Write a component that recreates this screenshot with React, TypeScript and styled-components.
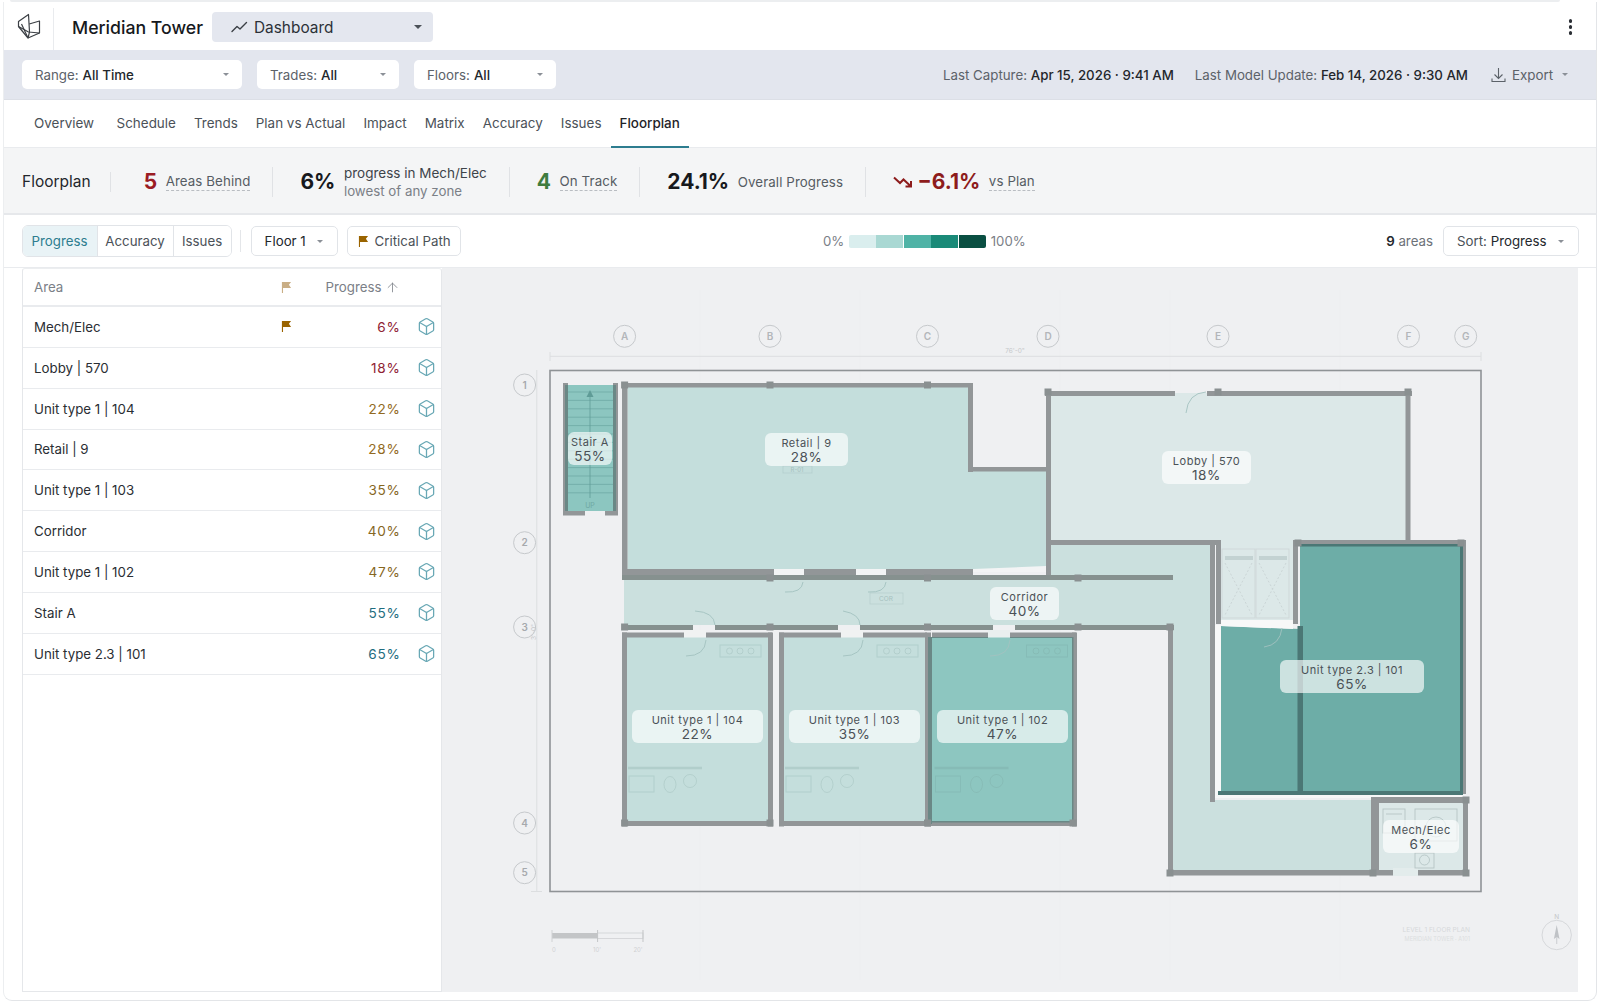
import styled, { createGlobalStyle } from "styled-components";
import { Box, ArrowUp } from "lucide-react";

const GlobalStyle = createGlobalStyle`
  html, body {
    margin: 0;
    padding: 0;
    background: #fff;
  }
  body {
    font-family: Inter, "Noto Sans", sans-serif;
    color: #1f2328;
    overflow: hidden;
  }
`;

const Page = styled.div`
  width: 1600px;
  height: 1005px;
  box-sizing: border-box;
  padding: 0 3px;
  position: relative;
`;

const TopEdge = styled.div`
  height: 2px;
  margin: 0 37px 0 7px;
  background: #eceef0;
  border-radius: 0 0 4px 4px;
`;

const Shell = styled.div`
  display: flex;
  flex-direction: column;
  height: 999px;
  box-sizing: border-box;
  border-bottom: 1px solid #e3e5e8;
  border-right: 1px solid #e3e5e8;
  border-left: 1px solid #eceef0;
  border-radius: 0 0 9px 9px;
  overflow: hidden;
`;

const Header = styled.header`
  height: 48px;
  flex: none;
  box-sizing: border-box;
  display: flex;
  align-items: center;
  padding: 6px 18px 0 0;
`;

const LogoCell = styled.div`
  width: 50px;
  height: 42px;
  box-sizing: border-box;
  border-right: 1px solid #e9ebee;
  display: flex;
  align-items: center;
  padding: 0 0 6px 13px;
  margin-right: 18px;
`;

const ProjectName = styled.h1`
  margin: -4px 9px 0 0;
  font-size: 17.7px;
  font-weight: 500;
  color: #16191d;
  white-space: nowrap;
`;

const ViewSelect = styled.div`
  width: 221px;
  height: 30px;
  margin-top: -4px;
  box-sizing: border-box;
  background: #e4e7ef;
  border-radius: 4px;
  display: flex;
  align-items: center;
  padding: 0 11px 0 19px;
  gap: 6px;
  font-size: 15.4px;
  color: #2c3138;
`;

const Caret = styled.span<{ $size?: number; $color?: string }>`
  margin-left: auto;
  width: 0;
  height: 0;
  flex: none;
  border-left: ${({ $size }) => $size ?? 3}px solid transparent;
  border-right: ${({ $size }) => $size ?? 3}px solid transparent;
  border-top: ${({ $size }) => $size ?? 3}px solid ${({ $color }) => $color ?? "#8b9097"};
`;

const MoreButton = styled.div`
  margin-left: auto;
  margin-top: -4px;
  display: flex;
  flex-direction: column;
  gap: 2.5px;
  padding-right: 6px;

  span {
    width: 3.5px;
    height: 3.5px;
    border-radius: 50%;
    background: #2b2f35;
  }
`;

const FilterBar = styled.div`
  height: 50px;
  flex: none;
  box-sizing: border-box;
  background: #e3e6ee;
  border-bottom: 1px solid #dcdfe6;
  display: flex;
  align-items: center;
  padding: 0 18px;
  gap: 15px;
  font-size: 13.3px;
`;

const FilterSelect = styled.div<{ $width: number }>`
  width: ${({ $width }) => $width}px;
  height: 29px;
  box-sizing: border-box;
  background: #fff;
  border-radius: 5px;
  display: flex;
  align-items: center;
  padding: 0 13px 0 13px;
  color: #5c6269;
  white-space: nowrap;

  b {
    font-weight: 500;
    color: #23272c;
    margin-left: 4px;
  }
`;

const CaptureInfo = styled.div`
  margin-left: auto;
  display: flex;
  align-items: center;
  gap: 21px;
  color: #5c6269;
  font-size: 13.3px;
  white-space: nowrap;

  b {
    font-weight: 500;
    color: #23272c;
  }
`;

const ExportButton = styled.div`
  display: flex;
  align-items: center;
  gap: 6px;
  width: 77px;
  margin: 0 10px 0 2px;
  color: #5c6269;
  font-size: 13.4px;
`;

const TabBar = styled.nav`
  height: 48px;
  flex: none;
  box-sizing: border-box;
  border-bottom: 1px solid #e9ebee;
  display: flex;
  align-items: stretch;
  padding-left: 21px;
`;

const Tab = styled.div<{ $active?: boolean; $gap?: number }>`
  display: flex;
  align-items: center;
  padding: 0 9px;
  margin-right: ${({ $gap }) => $gap ?? 0}px;
  font-size: 13.45px;
  font-weight: ${({ $active }) => ($active ? 500 : 400)};
  color: ${({ $active }) => ($active ? "#1f2328" : "#4b5158")};
  border-bottom: 2px solid ${({ $active }) => ($active ? "#2d7d8f" : "transparent")};
  margin-bottom: -1px;
`;

const StatsStrip = styled.section`
  height: 67px;
  flex: none;
  box-sizing: border-box;
  background: #f4f5f6;
  border-bottom: 2px solid #e6e8eb;
  display: flex;
  align-items: center;
  padding: 2px 0 0 18px;
`;

const StripTitle = styled.div`
  font-size: 15.5px;
  color: #23272c;
  padding-right: 19px;
  border-right: 1px solid #e0e2e5;
  line-height: 20px;
`;

const Stat = styled.div<{ $first?: boolean; $last?: boolean }>`
  display: flex;
  align-items: center;
  gap: 8.5px;
  height: 30px;
  padding: 0 22px 0 ${({ $first }) => ($first ? 33 : 27)}px;
  border-right: ${({ $last }) => ($last ? "none" : "1px solid #e0e2e5")};
`;

const StatValue = styled.span<{ $color?: string }>`
  font-size: 21px;
  font-weight: 700;
  color: ${({ $color }) => $color ?? "#17191d"};
`;

const TrendValue = styled(StatValue)`
  margin-left: -4px;
`;

const StatLabel = styled.span`
  font-size: 13.3px;
  color: #565c63;
  border-bottom: 1px dashed #b9bdc2;
  line-height: 17px;
  letter-spacing: 0.1px;
`;

const StatPlain = styled.span`
  font-size: 13.3px;
  color: #565c63;
  letter-spacing: 0.1px;
`;

const StatStack = styled.div`
  display: flex;
  flex-direction: column;
  font-size: 13.5px;
  line-height: 18px;
  color: #3e444a;

  small {
    font-size: 13.3px;
    color: #7b8087;
  }
`;

const Toolbar = styled.div`
  height: 52px;
  flex: none;
  box-sizing: border-box;
  display: flex;
  align-items: center;
  padding: 0 17px 0 17.6px;
  font-size: 13.3px;
  position: relative;
`;

const Segments = styled.div`
  display: flex;
  height: 32px;
  box-sizing: border-box;
  border: 1px solid #e1e4e8;
  border-radius: 6px;
  overflow: hidden;
  margin-right: 8px;
`;

const Segment = styled.div<{ $active?: boolean; $width: number }>`
  width: ${({ $width }) => $width}px;
  box-sizing: border-box;
  display: flex;
  align-items: center;
  justify-content: center;
  color: ${({ $active }) => ($active ? "#2d7d8f" : "#4b5158")};
  background: ${({ $active }) => ($active ? "#e9f3f6" : "#fff")};
  border-right: 1px solid #e1e4e8;

  &:last-child {
    border-right: 0;
  }
`;

const ToolSep = styled.div`
  width: 1px;
  height: 22px;
  background: #e4e6e9;
  margin-right: 10px;
`;

const ToolButton = styled.div<{ $width: number; $gap?: number }>`
  width: ${({ $width }) => $width}px;
  height: 30px;
  box-sizing: border-box;
  border: 1px solid #e1e4e8;
  border-radius: 5px;
  display: flex;
  align-items: center;
  gap: 6px;
  padding: 0 14px 0 10px;
  margin-right: ${({ $gap }) => $gap ?? 0}px;
  color: #4b5158;
  white-space: nowrap;

  em {
    font-style: normal;
    color: #23272c;
  }

  svg {
    flex: none;
  }
`;

const Legend = styled.div`
  position: absolute;
  left: 819px;
  top: 0;
  height: 52px;
  display: flex;
  align-items: center;
  gap: 4.5px;
  font-size: 13.2px;
  color: #7b8087;
`;

const LegendBar = styled.div`
  display: flex;
  border-radius: 2px;
  overflow: hidden;
  height: 13px;
`;

const LegendStep = styled.i<{ $color: string }>`
  width: 26.9px;
  margin-right: 0.6px;
  background: ${({ $color }) => $color};
`;

const ToolRight = styled.div`
  margin-left: auto;
  display: flex;
  align-items: center;
  gap: 10px;
  font-size: 13.3px;
  color: #6c7178;

  b {
    font-weight: 600;
    color: #23272c;
  }
`;

const Body = styled.main`
  flex: 1;
  min-height: 0;
  display: flex;
  padding: 0 18px 8px 18px;
  border-top: 1px solid #e9ebee;
`;

const TablePanel = styled.div`
  width: 420px;
  flex: none;
  box-sizing: border-box;
  border: 1px solid #e5e7ea;
  border-top-color: #eceef0;
  border-radius: 3px 3px 0 0;
`;

const TableHead = styled.div`
  height: 38px;
  box-sizing: border-box;
  display: flex;
  align-items: center;
  padding: 0 5.5px 0 11px;
  border-bottom: 2px solid #e9ebee;
  font-size: 13.3px;
  color: #7b8087;
`;

const TableRow = styled.div`
  height: 40.85px;
  box-sizing: border-box;
  display: flex;
  align-items: center;
  padding: 0 5.5px 0 11px;
  border-bottom: 1px solid #e9ebee;
  font-size: 13.3px;
  color: #2a2e33;
`;

const AreaName = styled.div`
  flex: 1;
  min-width: 0;
`;

const FlagCell = styled.div`
  width: 14px;
  display: flex;
`;

const ProgressCell = styled.div<{ $color?: string }>`
  width: 106px;
  display: flex;
  justify-content: flex-end;
  align-items: center;
  gap: 3px;
  margin-right: 16px;
  font-size: 13.6px;
  letter-spacing: 0.7px;
  color: ${({ $color }) => $color ?? "#7b8087"};
`;

const HeadProgress = styled(ProgressCell)`
  letter-spacing: 0;
  font-size: 13.3px;
  box-sizing: border-box;
  padding-right: 1px;
`;

const IconCell = styled.div`
  width: 19px;
  display: flex;
  color: #69a8b5;
`;

const PlanPanel = styled.div`
  flex: 1;
  min-width: 0;
  background: #eff0f2;
  position: relative;
  overflow: hidden;
`;

const PlanSvg = styled.svg`
  display: block;
  width: 1136px;
  height: 724px;
`;

const AreaTag = styled.div<{ $x: number; $y: number; $w: number }>`
  position: absolute;
  left: ${({ $x }) => $x - 442}px;
  top: ${({ $y }) => $y - 268}px;
  width: ${({ $w }) => $w}px;
  height: 33px;
  box-sizing: border-box;
  padding-top: 2px;
  border-radius: 6px;
  background: rgba(255, 255, 255, 0.65);
  display: flex;
  flex-direction: column;
  align-items: center;
  justify-content: center;
  color: #4a5156;
  font-size: 11px;
  letter-spacing: 0.5px;
  line-height: 14px;
  white-space: nowrap;

  strong {
    font-weight: 400;
    font-size: 13.6px;
    line-height: 15px;
  }
`;

const FlagIcon = ({ color }: { color: string }) => (
  <svg width="11" height="13" viewBox="0 0 12 14">
    <path d="M1 1h10L8.6 4 11 7.5H2.2V13H1z" fill={color} />
  </svg>
);

const rowsData = [
  { name: "Mech/Elec", pct: 6, color: "#8f2234", flag: true },
  { name: "Lobby | 570", pct: 18, color: "#8f2234" },
  { name: "Unit type 1 | 104", pct: 22, color: "#926a22" },
  { name: "Retail | 9", pct: 28, color: "#926a22" },
  { name: "Unit type 1 | 103", pct: 35, color: "#86671f" },
  { name: "Corridor", pct: 40, color: "#86671f" },
  { name: "Unit type 1 | 102", pct: 47, color: "#86671f" },
  { name: "Stair A", pct: 55, color: "#1f6d80" },
  { name: "Unit type 2.3 | 101", pct: 65, color: "#1f6d80" },
];

const tags = [
  { x: 568, y: 432, w: 44, name: "Stair A", pct: 55 },
  { x: 765, y: 433, w: 83, name: "Retail | 9", pct: 28 },
  { x: 1162, y: 451, w: 89, name: "Lobby | 570", pct: 18 },
  { x: 990, y: 587, w: 69, name: "Corridor", pct: 40 },
  { x: 632, y: 710, w: 131, name: "Unit type 1 | 104", pct: 22 },
  { x: 789, y: 710, w: 131, name: "Unit type 1 | 103", pct: 35 },
  { x: 937, y: 710, w: 131, name: "Unit type 1 | 102", pct: 47 },
  { x: 1280, y: 660, w: 144, name: "Unit type 2.3 | 101", pct: 65 },
  { x: 1383, y: 820, w: 76, name: "Mech/Elec", pct: 6 },
];

const gridCols: [string, number][] = [
  ["A", 624.6], ["B", 770], ["C", 927.5], ["D", 1048], ["E", 1218], ["F", 1408.5], ["G", 1465.7],
];
const gridRows: [string, number][] = [
  ["1", 385], ["2", 542.7], ["3", 627], ["4", 823], ["5", 872.7],
];

// x, y, w, h
const walls: number[][] = [
  // stair
  [563, 383, 5, 132], [613, 383, 5, 132], [563, 511, 22, 4.5], [605, 511, 13, 4.5],
  // retail
  [622, 383, 351, 4.5], [622, 383, 5.5, 196], [968, 383, 5, 89], [973, 467, 73, 4.5],
  [622, 569, 152, 6], [804, 569, 52, 6], [886, 569, 87, 6],
  // lobby
  [1045, 391, 130, 5], [1207, 391, 205, 5], [1046, 391, 5, 188], [1405.5, 391, 5, 150],
  [1051, 540, 170, 5], [1210, 545, 5, 257], [1216, 540, 5, 84], [1293, 540, 5, 84],
  [1293, 540, 172, 4.5],
  // corridor outer
  [1168, 625, 5, 248], [1168, 870, 225, 5.5], [1418, 870, 51, 5.5],
  // units
  [622, 632.5, 62, 5], [706, 632.5, 66, 5], [622, 632.5, 5, 194], [768, 632.5, 5, 194],
  [622, 821, 151, 5], [779, 632.5, 62, 5], [863, 632.5, 64, 5], [779, 632.5, 5, 194],
  [925, 632.5, 6, 194], [779, 821, 152, 5], [932, 632.5, 56, 5], [1010, 632.5, 66, 5],
  [1072, 632.5, 5, 194], [931, 821, 146, 5],
  // mech
  [1371, 798, 8, 77], [1371, 797, 98, 6], [1463, 797, 5, 78],
  // unit 2.3 outer
  [1463, 540, 3, 254],
];

const corridorWalls: number[][] = [
  [622, 575, 551, 5], [622, 625, 71, 5], [715, 625, 123, 5], [860, 625, 133, 5], [1015, 625, 159, 5],
];

const darkWalls: number[][] = [
  [1300, 544, 162, 2.5], [1460, 544, 3, 248], [1297.5, 626, 5.5, 166], [1218, 791, 245, 4],
];

const softWalls: number[][] = [
  [565, 385, 3, 126], [613, 385, 3, 126],
  [928, 637, 4, 187], [1072, 637, 1.5, 187], [932, 821, 140, 1.5], [932, 637, 56, 1], [1010, 637, 62, 1],
];

const columns: number[][] = [
  [624.6, 385], [770, 385], [927.5, 385], [1048, 392], [1218, 392], [1408, 392],
  [770, 578], [927.5, 578], [1078, 578], [624.6, 627], [770, 627], [927.5, 627], [1078, 627], [1170, 627],
  [624.6, 823], [770, 823], [927.5, 823], [1073, 823],
  [1170, 873], [1373, 873], [1466, 873], [1466, 800], [1461, 543], [1298, 543],
];

const doorArcs = [
  "M803 582 Q802 593 785 592", "M886 582 Q885 593 868 592",
  "M695 611 Q714 612 715 625", "M843 611 Q860 614 860 625",
  "M706 640 Q705 656 686 656", "M863 640 Q862 656 843 656", "M1010 640 Q1009 656 990 656",
  "M1206 392 Q1188 393 1186 413", "M1282 628 Q1280 645 1264 647",
];

const unitOffsets = [0, 157, 306.5];

const FloorPlan = () => (
  <PlanSvg viewBox="442 268 1136 724">
    {[700, 860, 1060, 1170, 1340].map((x) => (
      <line key={x} x1={x} y1="290" x2={x} y2="980" stroke="#edeef0" strokeWidth="1" />
    ))}
    <rect x="550" y="370.5" width="931" height="521" fill="none" stroke="#8f9396" strokeWidth="1.6" />

    <line x1="550" y1="356.3" x2="1481" y2="356.3" stroke="#dcdee0" />
    <line x1="550" y1="352" x2="550" y2="361" stroke="#dcdee0" />
    <line x1="1481" y1="352" x2="1481" y2="361" stroke="#dcdee0" />
    <text x="1015" y="353" fontSize="6.5" fill="#c6c8cb" textAnchor="middle">76'-0"</text>
    <line x1="536.8" y1="370" x2="536.8" y2="891" stroke="#dcdee0" />
    <line x1="531" y1="891.5" x2="542" y2="891.5" stroke="#dcdee0" />

    {gridCols.map(([label, x]) => (
      <g key={label}>
        <circle cx={x} cy="336.3" r="11" fill="none" stroke="#c6c9cc" />
        <text x={x} y="340" fontSize="10" fontWeight="600" fill="#b3b6ba" textAnchor="middle">{label}</text>
      </g>
    ))}
    {gridRows.map(([label, y]) => (
      <g key={label}>
        <circle cx="524.6" cy={y} r="11" fill="#eff0f2" stroke="#c6c9cc" />
        <text x="524.6" y={y + 3.7} fontSize="10" fontWeight="600" fill="#a6a9ad" textAnchor="middle">{label}</text>
      </g>
    ))}
    <text transform="translate(536 640) rotate(-90)" fontSize="6.5" fill="#c6c8cb">3'-0"</text>

    {/* area fills */}
    <path d="M1051 393H1406V540H1293V625H1221V540H1051z" fill="#dce8e8" />
    <path d="M624 579H1050V545H1210V800H1371V870H1173V625H624z" fill="#cbe0de" />
    <path d="M627.5 387H968V471H1046V572L627.5 569z" fill="#c4dedc" />
    <rect x="568" y="385" width="45" height="126" fill="#8cc6c0" />
    <rect x="627" y="637" width="141" height="184" fill="#c4dedc" />
    <rect x="784" y="637" width="141" height="184" fill="#c4dedc" />
    <rect x="932" y="637" width="141" height="184" fill="#8dc6c0" />
    <path d="M1300 545H1460V792H1220.7V626L1300 629z" fill="#6dada7" />
    <rect x="1379" y="803" width="84" height="67" fill="#dce8e8" />
    <rect x="1393" y="868" width="25" height="8" fill="#e3ecec" />
    <rect x="684" y="630" width="22" height="7.5" fill="#f0f2f2" />
    <rect x="841" y="630" width="22" height="7.5" fill="#f0f2f2" />
    <rect x="988" y="630" width="22" height="7.5" fill="#e9efef" />

    {/* door gaps */}
    <rect x="774" y="569" width="30" height="6" fill="#f3f4f5" />
    <rect x="856" y="569" width="30" height="6" fill="#f3f4f5" />
    <path d="M973 569L1046 566V572H973z" fill="#f3f4f5" />
    <path d="M1221 620H1293V629L1221 626z" fill="#f7f8f8" />
    <rect x="1215" y="625" width="6" height="170" fill="#f7f8f8" />
    <rect x="1215" y="795" width="248" height="3" fill="#f7f8f8" />

    {/* stair */}
    {Array.from({ length: 13 }, (_, i) => (
      <line key={i} x1="568" x2="613" y1={392 + i * 8.4} y2={392 + i * 8.4} stroke="#6faaa5" strokeWidth="0.8" />
    ))}
    <line x1="590" y1="392" x2="590" y2="498" stroke="#5f9c97" strokeWidth="0.8" />
    <path d="M586.5 397L590 390L593.5 397z" fill="#5f9c97" />
    <text x="590" y="508" fontSize="7" fill="#6fa8a3" textAnchor="middle">UP</text>

    {/* unit fixtures */}
    {unitOffsets.map((dx) => (
      <g key={dx} transform={`translate(${dx} 0)`} fill="none" stroke="#6f9491" strokeOpacity="0.22" strokeWidth="0.9">
        <rect x="720" y="645" width="41" height="12" />
        <circle cx="729.5" cy="651" r="3" />
        <circle cx="740" cy="651" r="3" />
        <circle cx="751" cy="651" r="3" />
        <line x1="628" y1="768" x2="702" y2="768" strokeWidth="2.4" />
        <rect x="629" y="776" width="25" height="16" />
        <ellipse cx="670" cy="784.5" rx="6" ry="8" />
        <circle cx="690" cy="781" r="6.5" />
      </g>
    ))}

    {/* retail and corridor small marks */}
    <rect x="783" y="466" width="29" height="7" fill="none" stroke="#8fb0ae" strokeOpacity="0.3" strokeWidth="0.8" />
    <text x="797" y="472" fontSize="6" fill="#a6c0be" textAnchor="middle">R-01</text>
    <rect x="870" y="593" width="33" height="11" fill="none" stroke="#8fb0ae" strokeOpacity="0.3" strokeWidth="0.8" />
    <text x="886" y="601" fontSize="6.5" fill="#a6c0be" textAnchor="middle">COR</text>

    {/* elevators */}
    {[1222, 1256].map((x) => (
      <g key={x}>
        <rect x={x} y="549" width="33" height="69" fill="none" stroke="#cfd8d9" strokeWidth="1" />
        <rect x={x + 3} y="556" width="28" height="4" fill="#c3d2d2" />
        <path d={`M${x + 3} 563L${x + 30} 615M${x + 30} 563L${x + 3} 615`} stroke="#c8d3d4" strokeWidth="0.9" strokeDasharray="2 2" />
      </g>
    ))}

    {/* mech fixtures */}
    <g fill="none" stroke="#a6b7b7" strokeOpacity="0.7" strokeWidth="0.9">
      <rect x="1383" y="809" width="22" height="24" />
      <line x1="1386" y1="814" x2="1402" y2="814" />
      <rect x="1415" y="809" width="42" height="32" />
      <circle cx="1436" cy="827" r="10" />
      <rect x="1415" y="853" width="19" height="15" />
      <circle cx="1424.5" cy="860" r="5" />
    </g>

    {doorArcs.map((d) => (
      <path key={d} d={d} fill="none" stroke="#a3c2c0" strokeWidth="0.9" />
    ))}

    {walls.map(([x, y, w, h]) => (
      <rect key={`${x}-${y}-${w}`} x={x} y={y} width={w} height={h} fill="#929698" />
    ))}
    {corridorWalls.map(([x, y, w, h]) => (
      <rect key={`${x}-${y}-${w}`} x={x} y={y} width={w} height={h} fill="#86918f" />
    ))}
    {softWalls.map(([x, y, w, h]) => (
      <rect key={`${x}-${y}-${w}`} x={x} y={y} width={w} height={h} fill="#6a8886" />
    ))}
    {darkWalls.map(([x, y, w, h]) => (
      <rect key={`${x}-${y}-${w}`} x={x} y={y} width={w} height={h} fill="#4b7775" />
    ))}
    {columns.map(([x, y]) => (
      <rect key={`${x}-${y}`} x={x - 3.5} y={y - 3.5} width="7" height="7" fill="#8a9091" />
    ))}

    {/* scale bar */}
    <rect x="552" y="933" width="45.6" height="5.5" fill="#c3c5c7" />
    <rect x="597.6" y="933" width="45.4" height="5.5" fill="none" stroke="#d0d2d4" strokeWidth="0.8" />
    <line x1="597.6" y1="930" x2="597.6" y2="942" stroke="#c3c5c7" />
    <line x1="643" y1="930" x2="643" y2="942" stroke="#c3c5c7" />
    <line x1="552" y1="930" x2="552" y2="942" stroke="#d0d2d4" />
    <text x="554" y="952" fontSize="6" fill="#cfd1d3" textAnchor="middle">0</text>
    <text x="597" y="952" fontSize="6" fill="#cfd1d3" textAnchor="middle">10'</text>
    <text x="638" y="952" fontSize="6" fill="#cfd1d3" textAnchor="middle">20'</text>

    {/* title block */}
    <text x="1470" y="932" fontSize="6.6" fill="#d6d8da" textAnchor="end">LEVEL 1 FLOOR PLAN</text>
    <text x="1470" y="941" fontSize="5.6" fill="#dcdee0" textAnchor="end">MERIDIAN TOWER · A101</text>

    {/* compass */}
    <text x="1556.7" y="919" fontSize="6.5" fill="#c3c5c8" textAnchor="middle">N</text>
    <circle cx="1556.7" cy="935" r="14.7" fill="none" stroke="#d6d8db" strokeWidth="1" />
    <path d="M1556.7 925L1559.5 939L1556.7 937L1553.9 939z" fill="#bfc2c6" />
    <path d="M1556.7 937V944" stroke="#d0d2d5" strokeWidth="1.2" />
  </PlanSvg>
);

export default function App() {
  return (
    <Page>
      <GlobalStyle />
      <TopEdge />
      <Shell>
        <Header>
          <LogoCell>
            <svg width="24" height="26" viewBox="0 0 24 26" fill="none" stroke="#3c4045" strokeWidth="1.2" strokeLinejoin="round">
              <path d="M1.5 8.5L11.5 1.5L12.5 19L11 25L1.5 13.5z" />
              <path d="M12.2 11L22.5 8V20L11 25" />
              <path d="M1.5 13.5L11.5 19L22.5 20" />
              <path d="M4.5 11L11 25" />
            </svg>
          </LogoCell>
          <ProjectName>Meridian Tower</ProjectName>
          <ViewSelect>
            <svg width="17" height="12" viewBox="0 0 17 12" fill="none" stroke="#3a3f45" strokeWidth="1.4" strokeLinejoin="round" strokeLinecap="round">
              <path d="M1 10.5L6 5.5L9 8L15.5 1.5" />
            </svg>
            Dashboard
            <Caret $size={4} $color="#4b5158" />
          </ViewSelect>
          <MoreButton>
            <span />
            <span />
            <span />
          </MoreButton>
        </Header>

        <FilterBar>
          <FilterSelect $width={220}>Range:<b>All Time</b><Caret /></FilterSelect>
          <FilterSelect $width={142}>Trades:<b>All</b><Caret /></FilterSelect>
          <FilterSelect $width={142}>Floors:<b>All</b><Caret /></FilterSelect>
          <CaptureInfo>
            <span>Last Capture: <b>Apr 15, 2026 · 9:41 AM</b></span>
            <span>Last Model Update: <b>Feb 14, 2026 · 9:30 AM</b></span>
            <ExportButton>
              <svg width="15" height="16" viewBox="0 0 15 16" fill="none" stroke="#5c6269" strokeWidth="1.1">
                <path d="M7.5 1V11.5M3.5 7.5L7.5 11.5L11.5 7.5M1 11.5V14.5H14V11.5" />
              </svg>
              Export
              <Caret />
            </ExportButton>
          </CaptureInfo>
        </FilterBar>

        <TabBar>
          <Tab $gap={4.5}>Overview</Tab>
          <Tab>Schedule</Tab>
          <Tab>Trends</Tab>
          <Tab>Plan vs Actual</Tab>
          <Tab>Impact</Tab>
          <Tab>Matrix</Tab>
          <Tab>Accuracy</Tab>
          <Tab>Issues</Tab>
          <Tab $active>Floorplan</Tab>
        </TabBar>

        <StatsStrip>
          <StripTitle>Floorplan</StripTitle>
          <Stat $first>
            <StatValue $color="#9b1c24">5</StatValue>
            <StatLabel>Areas Behind</StatLabel>
          </Stat>
          <Stat>
            <StatValue>6%</StatValue>
            <StatStack>
              progress in Mech/Elec
              <small>lowest of any zone</small>
            </StatStack>
          </Stat>
          <Stat>
            <StatValue $color="#3f7d3f">4</StatValue>
            <StatLabel>On Track</StatLabel>
          </Stat>
          <Stat>
            <StatValue>24.1%</StatValue>
            <StatPlain>Overall Progress</StatPlain>
          </Stat>
          <Stat $last>
            <svg width="20" height="13" viewBox="0 0 20 13" fill="none" stroke="#8d1c1c" strokeWidth="2">
              <path d="M1 2.5L7 8L10.5 4.5L18 11.5M18 6V11.5H12.5" />
            </svg>
            <TrendValue $color="#8d1c1c">−6.1%</TrendValue>
            <StatLabel>vs Plan</StatLabel>
          </Stat>
        </StatsStrip>

        <Toolbar>
          <Segments>
            <Segment $active $width={75}>Progress</Segment>
            <Segment $width={76}>Accuracy</Segment>
            <Segment $width={57}>Issues</Segment>
          </Segments>
          <ToolSep />
          <ToolButton $width={87} $gap={9}>
            <em style={{ marginLeft: 3 }}>Floor 1</em>
            <Caret />
          </ToolButton>
          <ToolButton $width={114}>
            <FlagIcon color="#9a6400" />
            Critical Path
          </ToolButton>
          <Legend>
            0%
            <LegendBar>
              {["#daeeee", "#a9d8d3", "#4fb3a6", "#1a8a78", "#0a4f42"].map((c) => (
                <LegendStep key={c} $color={c} />
              ))}
            </LegendBar>
            100%
          </Legend>
          <ToolRight>
            <span><b>9</b> areas</span>
            <ToolButton $width={136}>
              <span style={{ marginLeft: 3 }}>Sort: <em>Progress</em></span>
              <Caret />
            </ToolButton>
          </ToolRight>
        </Toolbar>

        <Body>
          <TablePanel>
            <TableHead>
              <AreaName>Area</AreaName>
              <FlagCell><FlagIcon color="#c9ae85" /></FlagCell>
              <HeadProgress>
                Progress <ArrowUp size={15} strokeWidth={1.3} />
              </HeadProgress>
              <IconCell />
            </TableHead>
            {rowsData.map((row) => (
              <TableRow key={row.name}>
                <AreaName>{row.name}</AreaName>
                <FlagCell>{row.flag && <FlagIcon color="#9a6400" />}</FlagCell>
                <ProgressCell $color={row.color}>{row.pct}%</ProgressCell>
                <IconCell><Box size={19} strokeWidth={1.6} /></IconCell>
              </TableRow>
            ))}
          </TablePanel>

          <PlanPanel>
            <FloorPlan />
            {tags.map((t) => (
              <AreaTag key={t.name} $x={t.x} $y={t.y} $w={t.w}>
                {t.name}
                <strong>{t.pct}%</strong>
              </AreaTag>
            ))}
          </PlanPanel>
        </Body>
      </Shell>
    </Page>
  );
}
